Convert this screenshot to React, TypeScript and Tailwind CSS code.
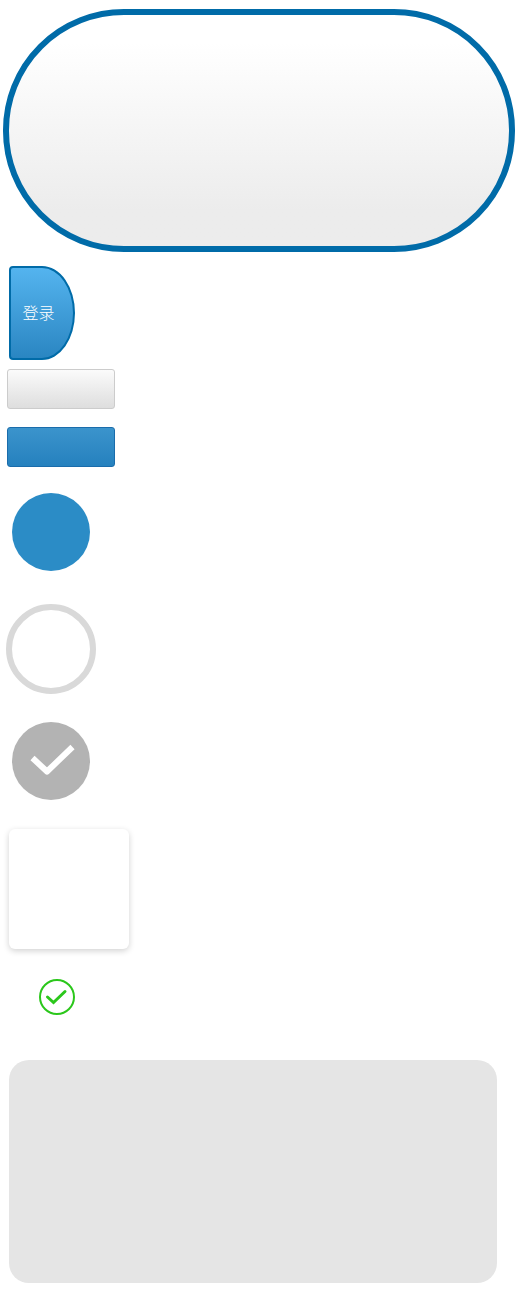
export default function App() {
  return (
    <div className="flex h-[1305px] w-[519px] flex-col items-start overflow-hidden bg-white font-['Liberation_Sans','Noto_Sans_CJK_SC',sans-serif]">
      <div className="mt-[9px] ml-[3px] h-[243px] w-[512px] rounded-[121px] border-[6px] border-[#006ba8] bg-gradient-to-b from-white from-[12%] to-[#ececec] to-[85%]" />

      <button className="mt-[14px] ml-[9px] flex h-[94px] w-[66px] items-center justify-center rounded-l-[4px] rounded-r-[33px_47px] border-2 border-[#006ba8] bg-gradient-to-b from-[#54b4ef] to-[#2a86c2] pt-[2px] pr-[7px] text-[16px] leading-none font-light text-white">
        登录
      </button>

      <div className="mt-[9px] ml-[7px] h-[40px] w-[108px] rounded-[3px] border border-[#cccccc] bg-gradient-to-b from-[#fbfbfb] to-[#dedede]" />
      <div className="mt-[18px] ml-[7px] h-[40px] w-[108px] rounded-[3px] border border-[#1a6cab] bg-gradient-to-b from-[#3b94cc] to-[#2581be]" />

      <div className="mt-[26px] ml-[12px] h-[78px] w-[78px] rounded-full bg-[#2b8cc6]" />
      <div className="mt-[33px] ml-[6px] h-[90px] w-[90px] rounded-full border-[6px] border-[#d9d9d9] bg-white" />

      <div className="mt-[28px] ml-[12px] flex h-[78px] w-[78px] items-center justify-center rounded-full bg-[#b3b3b3]">
        <svg width="78" height="78" viewBox="0 0 78 78" fill="none">
          <path d="M20.5 36 L35 49.5 L60.5 25" stroke="#ffffff" strokeWidth="6" strokeLinecap="butt" strokeLinejoin="round" />
        </svg>
      </div>

      <div className="mt-[29px] ml-[9px] h-[120px] w-[120px] rounded-[6px] bg-white shadow-[0_2px_6px_rgba(0,0,0,0.18)]" />

      <div className="mt-[30px] ml-[39px] h-[36px] w-[36px]">
        <svg width="36" height="36" viewBox="0 0 36 36" fill="none">
          <circle cx="18" cy="18" r="17" stroke="#2bc71b" strokeWidth="2" />
          <path d="M8.5 18 L14.5 23.5 L26 12.5" stroke="#2bc71b" strokeWidth="3" strokeLinecap="round" strokeLinejoin="miter" />
        </svg>
      </div>

      <div className="mt-[45px] ml-[9px] h-[223px] w-[488px] rounded-[20px] bg-[#e5e5e5]" />
    </div>
  );
}
